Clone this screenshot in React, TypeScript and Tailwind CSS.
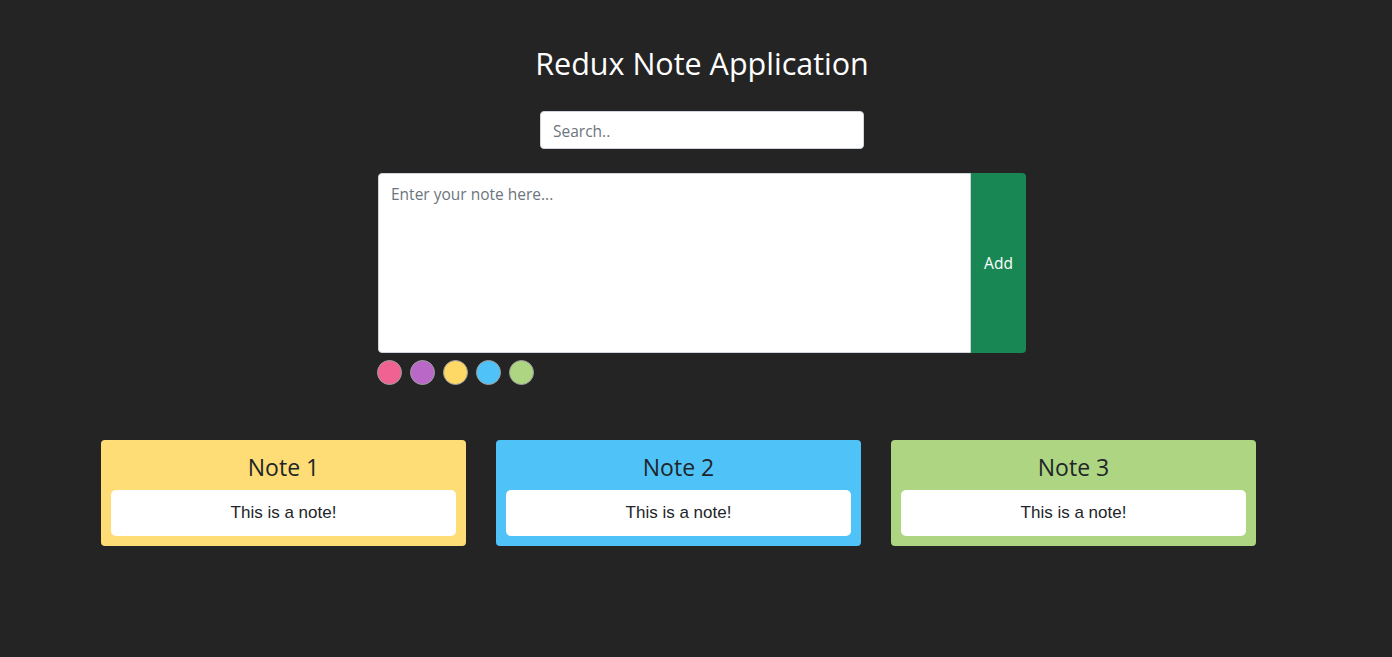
import React from "react";

const swatches = ["#f06292", "#ba68c8", "#ffd966", "#4fc3f7", "#aed581"];

const notes = [
  { title: "Note 1", color: "bg-[#ffdd76]" },
  { title: "Note 2", color: "bg-[#4fc3f7]" },
  { title: "Note 3", color: "bg-[#aed581]" },
];

export default function App() {
  return (
    <div
      className="min-h-screen w-full bg-[#242424] pt-[44px]"
      style={{ fontFamily: "'Open Sans', 'Noto Sans', sans-serif" }}
    >
      <div className="flex flex-col items-center pl-[12px]">
        <h1 className="text-[30.5px] leading-[38px] text-white font-normal">
          Redux Note Application
        </h1>
        <input
          type="text"
          placeholder="Search.."
          className="mt-[29px] w-[324px] h-[38px] rounded-[4px] border border-[#ced4da] bg-white px-[12px] pt-[1px] text-[15.5px] text-[#212529] placeholder:text-[#6c757d] outline-none"
        />
        <div className="mt-[24px] w-[648px]">
          <div className="flex h-[180px]">
            <textarea
              placeholder="Enter your note here..."
              className="flex-1 resize-none rounded-l-[4px] border border-[#ced4da] bg-white px-[12px] pt-[8px] pb-[6px] text-[15.5px] leading-[24px] text-[#212529] placeholder:text-[#6c757d] outline-none"
            />
            <button className="w-[55px] rounded-r-[4px] bg-[#198754] pt-[1px] text-[15.5px] text-white">
              Add
            </button>
          </div>
          <div className="mt-[7px] -ml-[1px] flex gap-[8px]">
            {swatches.map((c) => (
              <span
                key={c}
                className="block h-[25px] w-[25px] rounded-full border border-[#9e9e9e]"
                style={{ backgroundColor: c }}
              />
            ))}
          </div>
        </div>
      </div>
      <div className="mt-[55px] flex gap-[30px] pl-[101px]">
        {notes.map((n) => (
          <div
            key={n.title}
            className={`w-[365px] rounded-[4px] px-[10px] pt-[9px] pb-[10px] ${n.color}`}
          >
            <div className="h-[36px] leading-[36px] mb-[5px] text-center text-[23px] text-[#212529]">
              {n.title}
            </div>
            <div
              className="flex h-[46px] items-center justify-center rounded-[5px] bg-white text-[17px] text-[#212529]"
              style={{ fontFamily: "'Liberation Sans', Arial, sans-serif" }}
            >
              This is a note!
            </div>
          </div>
        ))}
      </div>
    </div>
  );
}
